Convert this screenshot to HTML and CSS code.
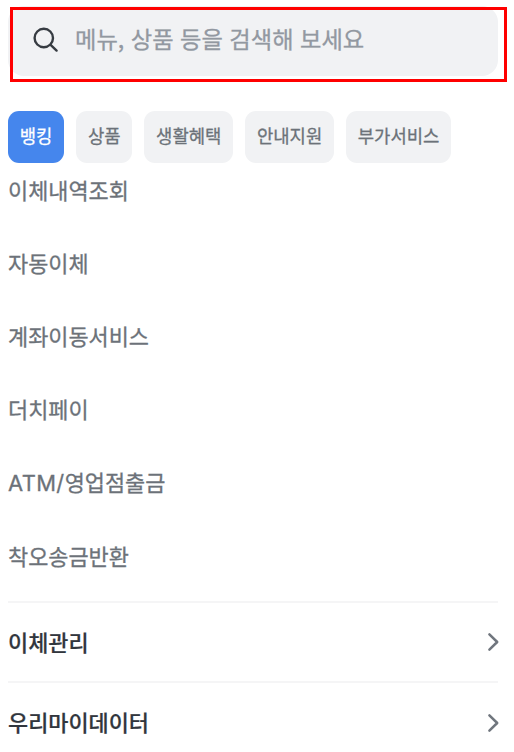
FILE: index.html
```html
<!DOCTYPE html>
<html lang="ko">
<head>
<meta charset="utf-8">
<title>전체 메뉴</title>
<link rel="stylesheet" href="styles.css">
</head>
<body>
<main class="page">
  <div class="search">
    <svg class="search-icon" viewBox="0 0 26 26"><circle cx="10.8" cy="11" r="9.2"/><path d="M17.6 17.8l6 5.8"/></svg>
    <span class="placeholder">메뉴, 상품 등을 검색해 보세요</span>
    <div class="highlight"></div>
  </div>
  <nav class="tabs">
    <a class="tab active">뱅킹</a>
    <a class="tab">상품</a>
    <a class="tab">생활혜택</a>
    <a class="tab">안내지원</a>
    <a class="tab">부가서비스</a>
  </nav>
  <ul class="menu">
    <li>이체내역조회</li>
    <li>자동이체</li>
    <li>계좌이동서비스</li>
    <li>더치페이</li>
    <li><span class="latin">ATM/</span>영업점출금</li>
    <li>착오송금반환</li>
  </ul>
  <div class="section"><span>이체관리</span><svg class="chevron" viewBox="0 0 12 20"><path d="M2.4 2.3l7.8 7.7-7.8 7.7"/></svg></div>
  <div class="section"><span>우리마이데이터</span><svg class="chevron" viewBox="0 0 12 20"><path d="M2.4 2.3l7.8 7.7-7.8 7.7"/></svg></div>
</main>
</body>
</html>
```
FILE: styles.css
```css
* { box-sizing: border-box; }
body {
  margin: 0;
  background: #fff;
  color: #6c7279;
  font-family: "Noto Sans CJK KR", sans-serif;
  overflow: hidden;
}
.page { width: 514px; height: 752px; padding: 6px 16px 0 8px; overflow: hidden; }
.search {
  position: relative;
  display: flex;
  align-items: center;
  height: 70px;
  padding: 0 0 2px 25px;
  border-radius: 16px;
  background: #f1f2f4;
}
.search-icon { width: 26px; height: 26px; fill: none; stroke: #373c42; stroke-width: 2.4; stroke-linecap: round; }
.placeholder { margin: -4px 0 0 16px; font-size: 23.25px; line-height: 36px; color: #9298a1; -webkit-text-stroke: 0.3px #9298a1; white-space: nowrap; }
.highlight { position: absolute; left: 2px; top: 1px; width: 497px; height: 75px; border: 3px solid #f00; }
.tabs { display: flex; gap: 12px; margin-top: 35px; }
.tab {
  height: 52px;
  padding: 0 11.75px;
  border-radius: 11px;
  background: #f1f2f4;
  font-size: 17.75px;
  line-height: 49px;
  -webkit-text-stroke: 0.3px currentColor;
  white-space: nowrap;
}
.tab.active { background: #4586ed; color: #fff; }
.menu { list-style: none; height: 438px; margin: 0; padding: 0; }
.menu li { height: 73.2px; padding-top: 10.6px; font-size: 21.9px; line-height: 32px; -webkit-text-stroke: 0.3px currentColor; }
.latin { font-family: Inter, sans-serif; font-size: 21.9px; letter-spacing: 0.4px; }
.section {
  display: flex;
  align-items: center;
  justify-content: space-between;
  height: 80.4px;
  border-top: 2px solid #f5f5f6;
  color: #31363d;
  font-size: 21.9px;
  font-weight: 500;
  -webkit-text-stroke: 0.2px currentColor;
}
.section span { margin-top: -2px; }
.chevron { width: 12px; height: 20px; margin-right: -1px; fill: none; stroke: #70767e; stroke-width: 2.5; stroke-linecap: round; stroke-linejoin: round; }
```
